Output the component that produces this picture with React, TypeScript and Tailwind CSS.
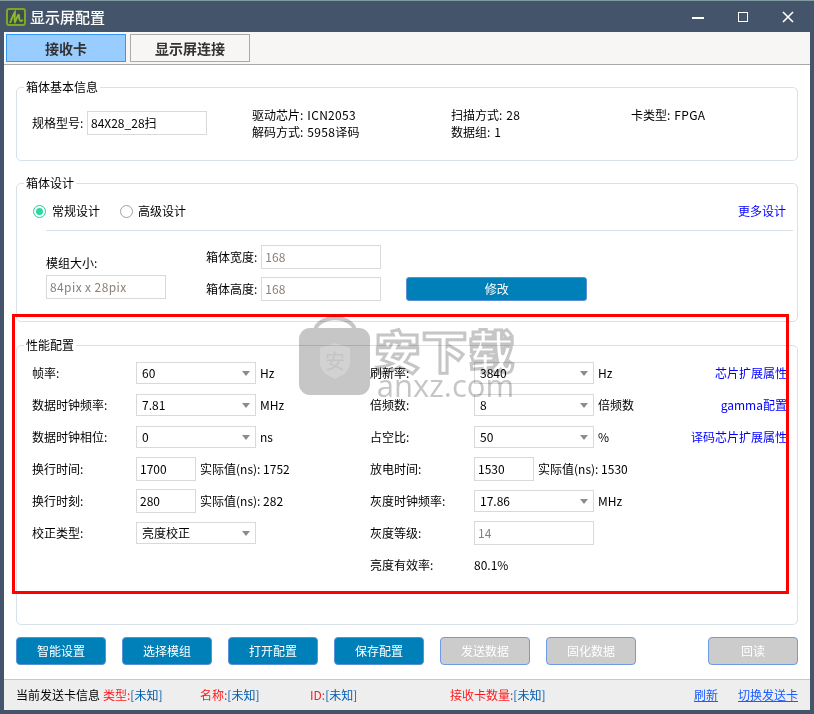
import type { ReactNode } from "react";

const FONT = "font-['Noto_Sans_CJK_SC','Microsoft_YaHei',sans-serif]";

function Group({ title, className, children }: { title: string; className: string; children: ReactNode }) {
  return (
    <fieldset className={`rounded-[5px] border border-[#d8e0e8] ${className}`}>
      <legend className="ml-[7px] px-[2px] text-[12px] leading-[16px]">{title}</legend>
      {children}
    </fieldset>
  );
}

function Arrow() {
  return (
    <svg width="8" height="5" viewBox="0 0 8 5" className="shrink-0">
      <polygon points="0,0 8,0 4,5" fill="#8c8c8c" />
    </svg>
  );
}

function Select({ value }: { value: string }) {
  return (
    <div className="flex h-[22px] w-[120px] items-center justify-between border border-[#d9d9d9] pl-[5px] pr-[5px]">
      <span>{value}</span>
      <Arrow />
    </div>
  );
}

function Input({ value, width = "w-[60px]", disabled }: { value: string; width?: string; disabled?: boolean }) {
  return (
    <div
      className={`flex h-[24px] items-center border border-[#d9d9d9] px-[3px] ${width} ${disabled ? "text-[#8b8076]" : ""}`}
    >
      {value}
    </div>
  );
}

function Row({ label, children }: { label: string; children: ReactNode }) {
  return (
    <div className="flex h-[32px] items-center">
      <span className="w-[104px] shrink-0">{label}</span>
      {children}
    </div>
  );
}

function Unit({ children }: { children: ReactNode }) {
  return <span className="ml-[4px]">{children}</span>;
}

function Link({ children }: { children: ReactNode }) {
  return <span className="ml-auto text-[#0000ff]">{children}</span>;
}

function Info({ label, value }: { label: string; value: string }) {
  return (
    <span>
      {label}:<span className="ml-[4px] tracking-[0.3px]">{value}</span>
    </span>
  );
}

function ActionButton({ label, muted, className = "" }: { label: string; muted?: boolean; className?: string }) {
  return (
    <button
      className={`h-[28px] w-[90px] rounded-[4px] border text-[12px] text-white ${
        muted ? "border-[#6f9ae6] bg-[#cccccc]" : "border-[#5b8fd8] bg-[#0080b8]"
      } ${className}`}
    >
      {label}
    </button>
  );
}

function Status({ label, className }: { label: string; className: string }) {
  return (
    <span className={className}>
      <span className="text-[#ff1a1a]">{label}:</span>
      <span className="text-[#005cb0]">[未知]</span>
    </span>
  );
}

function Watermark() {
  return (
    <div className="pointer-events-none absolute left-[299px] top-[315px] flex gap-[4px] mix-blend-multiply">
      <svg width="72" height="80" viewBox="0 0 72 80">
        <path d="M16 16 C18 -1 54 -1 56 16" fill="none" stroke="#c6c6c6" strokeWidth="4" />
        <rect x="0" y="13" width="71" height="67" rx="11" fill="#c6c6c6" />
        <path d="M21 33 L36 28 L51 33 V48 C51 56 43 61 36 64 C29 61 21 56 21 48 Z" fill="#d2d2d2" />
        <text x="36" y="54" textAnchor="middle" fontSize="20" fill="#c4c4c4" fontFamily="Noto Sans CJK SC">
          安
        </text>
      </svg>
      <div className="flex flex-col items-center pt-[12px]">
        <span className="text-[45px] leading-[46px] font-black tracking-[2px] text-white [-webkit-text-stroke:3px_#c6c6c6]">
          安下载
        </span>
        <span className="text-[31px] leading-[24px] text-[#c6c6c6] font-['Open_Sans',sans-serif]">anxz.com</span>
      </div>
    </div>
  );
}

export default function App() {
  return (
    <div className={`relative flex h-[714px] w-[814px] flex-col bg-[#44546a] text-[12px] leading-[16px] text-black ${FONT}`}>
      <div className="h-[1px] bg-[#7f9aa0]" />
      <header className="flex h-[31px] items-center pl-[6px] pr-[5px] text-white">
        <svg width="20" height="18" viewBox="0 0 20 18" className="mr-[4px]">
          <rect x="1" y="1" width="18" height="16" rx="2" fill="#3f4c4e" stroke="#7fa52a" strokeWidth="2" />
          <path
            d="M4 15 C6 10 8 5 9 4 C9 8 8 12 9 14 C11 10 12 6 13 7 C13 10 13 13 15 13 L17 12"
            fill="none"
            stroke="#8cb832"
            strokeWidth="1.8"
          />
        </svg>
        <span className="text-[15px] font-medium">显示屏配置</span>
        <div className="ml-auto flex items-center">
          <svg width="46" height="30" viewBox="0 0 46 30">
            <rect x="17" y="15" width="12" height="2" fill="#fff" />
          </svg>
          <svg width="46" height="30" viewBox="0 0 46 30">
            <rect x="17.5" y="10.5" width="9" height="9" fill="none" stroke="#fff" />
          </svg>
          <svg width="42" height="30" viewBox="0 0 42 30">
            <path d="M16 10 L26 20 M26 10 L16 20" stroke="#fff" strokeWidth="1.6" />
          </svg>
        </div>
      </header>

      <div className="mx-[4px] mb-[4px] flex min-h-0 flex-1 flex-col bg-white">
        <nav className="flex h-[33px] items-start gap-[4px] border-b border-[#aaaaaa] bg-[#f7f6f4] pl-[2px] pt-[2px] text-[14px] font-bold text-[#333]">
          <button className="h-[28px] w-[120px] border border-[#3399ff] bg-[#99ccff]">接收卡</button>
          <button className="h-[28px] w-[120px] border border-[#aaaaaa]">显示屏连接</button>
        </nav>

        <main className="flex flex-1 flex-col px-[12px] pt-[14px]">
          <Group title="箱体基本信息" className="h-[82px]">
            <div className="flex items-center pl-[15px] pt-[11px]">
              <div className="flex h-[24px] items-center">
                <span className="w-[55px]">规格型号:</span>
                <Input value="84X28_28扫" width="w-[120px]" />
              </div>
              <div className="ml-[45px] grid grid-cols-[199px_180px_auto] leading-[17px]">
                <Info label="驱动芯片" value="ICN2053" />
                <Info label="扫描方式" value="28" />
                <Info label="卡类型" value="FPGA" />
                <Info label="解码方式" value="5958译码" />
                <Info label="数据组" value="1" />
              </div>
            </div>
          </Group>

          <Group title="箱体设计" className="mt-[14px] h-[147px]">
            <div className="ml-[29px] mr-[4px] mt-[1px] flex h-[39px] items-center border-b border-[#d8e0e8]">
              <div className="-ml-[13px] flex items-center">
                <span className="flex h-[13px] w-[13px] items-center justify-center rounded-full border border-[#2fc79a]">
                  <span className="h-[7px] w-[7px] rounded-full bg-[#2fd6a0]" />
                </span>
                <span className="ml-[6px]">常规设计</span>
                <span className="ml-[20px] h-[13px] w-[13px] rounded-full border border-[#a0a0a0]" />
                <span className="ml-[5px]">高级设计</span>
              </div>
              <Link>
                <span className="mr-[7px]">更多设计</span>
              </Link>
            </div>
            <div className="flex pl-[29px] pt-[14px]">
              <div className="w-[160px] pt-[10px]">
                <div className="mb-[4px] leading-[16px]">模组大小:</div>
                <div className="tracking-[0.4px]">
                  <Input value="84pix x 28pix" width="w-[120px]" disabled />
                </div>
              </div>
              <div className="flex flex-col gap-[8px]">
                <div className="flex items-center gap-[4px]">
                  <span>箱体宽度:</span>
                  <Input value="168" width="w-[120px]" disabled />
                </div>
                <div className="flex items-center gap-[4px]">
                  <span>箱体高度:</span>
                  <Input value="168" width="w-[120px]" disabled />
                </div>
              </div>
              <button className="ml-[25px] mt-[32px] h-[24px] w-[181px] rounded-[3px] border border-[#5b8fd8] bg-[#0080b8] text-white">
                修改
              </button>
            </div>
          </Group>

          <Group title="性能配置" className="mt-[15px] h-[288px]">
            <div className="grid grid-cols-[338px_1fr] pl-[15px] pr-[10px] pt-[4px]">
              <div className="flex flex-col">
                <Row label="帧率:">
                  <Select value="60" />
                  <Unit>Hz</Unit>
                </Row>
                <Row label="数据时钟频率:">
                  <Select value="7.81" />
                  <Unit>MHz</Unit>
                </Row>
                <Row label="数据时钟相位:">
                  <Select value="0" />
                  <Unit>ns</Unit>
                </Row>
                <Row label="换行时间:">
                  <Input value="1700" />
                  <Unit>实际值(ns): 1752</Unit>
                </Row>
                <Row label="换行时刻:">
                  <Input value="280" />
                  <Unit>实际值(ns): 282</Unit>
                </Row>
                <Row label="校正类型:">
                  <Select value="亮度校正" />
                </Row>
              </div>
              <div className="flex flex-col">
                <Row label="刷新率:">
                  <Select value="3840" />
                  <Unit>Hz</Unit>
                  <Link>芯片扩展属性</Link>
                </Row>
                <Row label="倍频数:">
                  <Select value="8" />
                  <Unit>倍频数</Unit>
                  <Link>gamma配置</Link>
                </Row>
                <Row label="占空比:">
                  <Select value="50" />
                  <Unit>%</Unit>
                  <Link>译码芯片扩展属性</Link>
                </Row>
                <Row label="放电时间:">
                  <Input value="1530" />
                  <Unit>实际值(ns): 1530</Unit>
                </Row>
                <Row label="灰度时钟频率:">
                  <Select value="17.86" />
                  <Unit>MHz</Unit>
                </Row>
                <Row label="灰度等级:">
                  <Input value="14" width="w-[120px]" disabled />
                </Row>
                <Row label="亮度有效率:">
                  <span>80.1%</span>
                </Row>
              </div>
            </div>
          </Group>

          <div className="mt-[12px] flex gap-[16px]">
            <ActionButton label="智能设置" />
            <ActionButton label="选择模组" />
            <ActionButton label="打开配置" />
            <ActionButton label="保存配置" />
            <ActionButton label="发送数据" muted />
            <ActionButton label="固化数据" muted />
            <ActionButton label="回读" muted className="ml-[56px]" />
          </div>
        </main>

        <footer className="flex h-[31px] items-center border-t border-[#c8c8c8] bg-[#eeeeee] pl-[12px] pr-[12px]">
          <span className="w-[87px]">当前发送卡信息</span>
          <Status label="类型" className="w-[97px]" />
          <Status label="名称" className="w-[110px]" />
          <Status label="ID" className="w-[140px]" />
          <Status label="接收卡数量" className="w-[244px]" />
          <span className="text-[#1a5cff] underline">刷新</span>
          <span className="ml-auto text-[#1a5cff] underline">切换发送卡</span>
        </footer>
      </div>

      <div className="pointer-events-none absolute left-[12px] top-[314px] h-[280px] w-[777px] border-[3px] border-[#ff0000]" />
      <Watermark />
    </div>
  );
}
